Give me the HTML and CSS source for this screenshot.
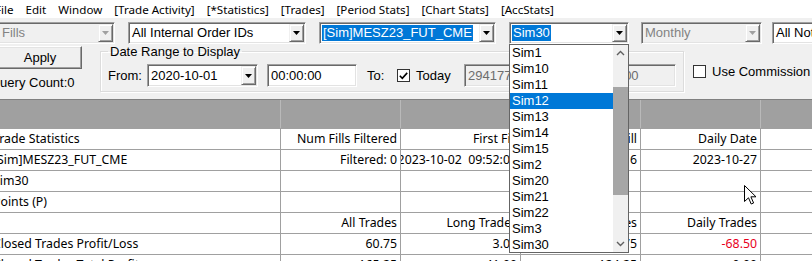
FILE: index.html
```html
<!DOCTYPE html>
<html>
<head>
<meta charset="utf-8">
<title>Trade Statistics</title>
<link rel="stylesheet" href="styles.css">
</head>
<body>
<nav class="menubar">
  <span class="menu first">File</span>
  <span class="menu">Edit</span>
  <span class="menu">Window</span>
  <span class="menu">[Trade Activity]</span>
  <span class="menu">[*Statistics]</span>
  <span class="menu">[Trades]</span>
  <span class="menu">[Period Stats]</span>
  <span class="menu">[Chart Stats]</span>
  <span class="menu">[AccStats]</span>
</nav>

<div class="toolbar">
  <div class="combos">
    <div class="combo disabled c-fills">
      <span class="combo-text">Fills</span>
      <span class="combo-btn"><svg width="7" height="4" viewBox="0 0 7 4"><path d="M0 0h7L3.5 4z"/></svg></span>
    </div>
    <div class="combo c-ids">
      <span class="combo-text">All Internal Order IDs</span>
      <span class="combo-btn"><svg width="7" height="4" viewBox="0 0 7 4"><path d="M0 0h7L3.5 4z"/></svg></span>
    </div>
    <div class="combo c-sym">
      <span class="combo-text"><span class="sel">[Sim]MESZ23_FUT_CME</span></span>
      <span class="combo-btn"><svg width="7" height="4" viewBox="0 0 7 4"><path d="M0 0h7L3.5 4z"/></svg></span>
    </div>
    <div class="combo c-acct">
      <span class="combo-text"><span class="sel">Sim30</span></span>
      <span class="combo-btn"><svg width="7" height="4" viewBox="0 0 7 4"><path d="M0 0h7L3.5 4z"/></svg></span>
      <div class="dropdown">
        <ul class="dd-list">
          <li>Sim1</li>
          <li>Sim10</li>
          <li>Sim11</li>
          <li class="sel">Sim12</li>
          <li>Sim13</li>
          <li>Sim14</li>
          <li>Sim15</li>
          <li>Sim2</li>
          <li>Sim20</li>
          <li>Sim21</li>
          <li>Sim22</li>
          <li>Sim3</li>
          <li>Sim30</li>
        </ul>
        <div class="dd-scroll">
          <span class="sb-btn"><svg width="9" height="6" viewBox="0 0 9 6"><path d="M1 5L4.5 1.5L8 5" fill="none" stroke="#606060" stroke-width="1.4"/></svg></span>
          <span class="sb-track"><span class="sb-thumb"></span></span>
          <span class="sb-btn"><svg width="9" height="6" viewBox="0 0 9 6"><path d="M1 1L4.5 4.5L8 1" fill="none" stroke="#606060" stroke-width="1.4"/></svg></span>
        </div>
      </div>
    </div>
    <div class="combo disabled c-period">
      <span class="combo-text">Monthly</span>
      <span class="combo-btn"><svg width="7" height="4" viewBox="0 0 7 4"><path d="M0 0h7L3.5 4z"/></svg></span>
    </div>
    <div class="combo c-notes">
      <span class="combo-text">All Notes</span>
      <span class="combo-btn"><svg width="7" height="4" viewBox="0 0 7 4"><path d="M0 0h7L3.5 4z"/></svg></span>
    </div>
  </div>

  <div class="controls">
    <div class="left-col">
      <button class="btn">Apply</button>
      <div class="query">Query Count:0</div>
    </div>
    <fieldset class="group">
      <legend>Date Range to Display</legend>
      <div class="group-row">
        <span class="lbl l-from">From:</span>
        <div class="datepick">
          <span class="edit-text">2020-10-01</span>
          <span class="combo-btn"><svg width="7" height="4" viewBox="0 0 7 4"><path d="M0 0h7L3.5 4z"/></svg></span>
        </div>
        <div class="edit e-time">00:00:00</div>
        <span class="lbl l-to">To:</span>
        <span class="check"><svg width="9" height="8" viewBox="0 0 9 8"><path d="M0.8 3.8L3.3 6.3L8.2 0.9" fill="none" stroke="#000" stroke-width="1.6"/></svg></span>
        <span class="lbl l-today">Today</span>
        <div class="edit disabled e-date2">29417760</div>
        <div class="edit disabled e-time2">00:00:00</div>
      </div>
    </fieldset>
    <div class="commission">
      <span class="check"></span>
      <span class="lbl">Use Commission</span>
    </div>
  </div>
</div>

<div class="grid">
  <div class="grow head">
    <div class="cell"></div><div class="cell"></div><div class="cell"></div><div class="cell"></div><div class="cell"></div><div class="cell"></div>
  </div>
  <div class="grow">
    <div class="cell">Trade Statistics</div>
    <div class="cell r">Num Fills Filtered</div>
    <div class="cell r">First Fill</div>
    <div class="cell r">Last Fill</div>
    <div class="cell r">Daily Date</div>
    <div class="cell"></div>
  </div>
  <div class="grow">
    <div class="cell">[Sim]MESZ23_FUT_CME</div>
    <div class="cell r">Filtered: 0</div>
    <div class="cell r">2023-10-02  09:52:04</div>
    <div class="cell r">2023-10-27  14:23:16</div>
    <div class="cell r">2023-10-27</div>
    <div class="cell"></div>
  </div>
  <div class="grow">
    <div class="cell">Sim30</div>
    <div class="cell"></div><div class="cell"></div><div class="cell"></div><div class="cell"></div><div class="cell"></div>
  </div>
  <div class="grow">
    <div class="cell">Points (P)</div>
    <div class="cell"></div><div class="cell"></div><div class="cell"></div><div class="cell"></div><div class="cell"></div>
  </div>
  <div class="grow">
    <div class="cell"></div>
    <div class="cell r">All Trades</div>
    <div class="cell r">Long Trades</div>
    <div class="cell r">Short Trades</div>
    <div class="cell r">Daily Trades</div>
    <div class="cell"></div>
  </div>
  <div class="grow">
    <div class="cell">Closed Trades Profit/Loss</div>
    <div class="cell r">60.75</div>
    <div class="cell r">3.00</div>
    <div class="cell r">57.75</div>
    <div class="cell r neg">-68.50</div>
    <div class="cell"></div>
  </div>
  <div class="grow">
    <div class="cell">Closed Trades Total Profit</div>
    <div class="cell r">165.25</div>
    <div class="cell r">41.00</div>
    <div class="cell r">124.25</div>
    <div class="cell r">0.00</div>
    <div class="cell"></div>
  </div>
</div>

<svg class="cursor" width="13" height="20" viewBox="0 0 13 20">
  <path d="M0.5 0.5V16.5L4.5 12.8L7.2 19L9.6 18L6.9 11.8H12Z" fill="#fff" stroke="#000" stroke-width="1" stroke-linejoin="miter"/>
</svg>
</body>
</html>
```

FILE: styles.css
```css
* { box-sizing: border-box; }

html, body {
  margin: 0;
  padding: 0;
}

body {
  width: 812px;
  height: 261px;
  overflow: hidden;
  position: relative;
  background: #f0f0f0;
  color: #000;
  font-family: "Liberation Sans", Arial, sans-serif;
  font-size: 13px;
}

/* ---------- menu bar ---------- */
.menubar {
  display: flex;
  height: 18px;
  padding-top: 1px;
  background: #fff;
  font-family: "Noto Sans", sans-serif;
  font-size: 11.6px;
  line-height: 17px;
  white-space: nowrap;
}
.menu { padding: 0 6px; }
.menu.first { margin-left: -11px; }

/* ---------- toolbar ---------- */
.toolbar { height: 81px; }

.combos {
  display: flex;
  gap: 13px;
  padding-top: 4px;
  height: 26px;
}

.combo {
  position: relative;
  flex: none;
  display: flex;
  height: 22px;
  padding: 1px;
  background: #fff;
  border: 1px solid;
  border-color: #a0a0a0 #fff #fff #a0a0a0;
  box-shadow: inset 1px 1px #696969, inset -1px -1px #e3e3e3;
}
.combo.disabled { background: #f0f0f0; color: #838383; }
.combo.disabled .combo-btn svg { fill: #a0a0a0; }

.c-fills { width: 117px; margin-left: -2px; }
.c-ids { width: 178px; }
.c-sym { width: 177px; }
.c-acct { width: 120px; }
.c-period { width: 121px; margin-left: -1px; }
.c-notes { width: 120px; margin-left: -3px; }

.combo-text {
  flex: 1;
  min-width: 0;
  padding-left: 2px;
  line-height: 18px;
  white-space: nowrap;
  overflow: hidden;
}
.sel {
  display: inline-block;
  margin-left: -1px;
  padding: 0 1px;
  line-height: 16px;
  background: #0078d7;
  color: #fff;
}

.combo-btn {
  flex: none;
  width: 15px;
  display: flex;
  align-items: center;
  justify-content: center;
  background: #f0f0f0;
  border: 1px solid;
  border-color: #f0f0f0 #696969 #696969 #f0f0f0;
  box-shadow: inset 1px 1px #fff, inset -1px -1px #a0a0a0;
}
.combo-btn svg { fill: #000; }

/* ---------- dropdown list ---------- */
.dropdown {
  position: absolute;
  left: -1px;
  top: calc(100% + 1px);
  z-index: 5;
  width: 120px;
  height: 209px;
  display: flex;
  background: #fff;
  border: 1px solid #646464;
  color: #000;
}
.dd-list {
  flex: 1;
  list-style: none;
  margin: 0;
  padding: 0;
  overflow: hidden;
}
.dd-list li {
  height: 16px;
  line-height: 16px;
  padding-left: 2px;
  white-space: nowrap;
}
.dd-list li.sel {
  display: block;
  margin: 0;
  background: #0078d7;
  color: #fff;
}
.dd-scroll {
  flex: none;
  width: 15px;
  display: flex;
  flex-direction: column;
  background: #f0f0f0;
}
.sb-btn {
  flex: none;
  height: 16px;
  display: flex;
  align-items: center;
  justify-content: center;
}
.sb-track { flex: 1; }
.sb-thumb {
  display: block;
  margin-top: 26px;
  height: 108px;
  background: #a6a6a6;
}

/* ---------- second row ---------- */
.controls {
  display: flex;
  height: 55px;
}

.left-col {
  flex: none;
  width: 110px;
  margin-left: -10px;
}
.btn {
  display: block;
  width: 84px;
  height: 23px;
  margin: 2px 0 0 8px;
  padding: 0;
  background: #f0f0f0;
  border: 1px solid;
  border-color: #fff #696969 #696969 #fff;
  box-shadow: inset -1px -1px #a0a0a0, inset 1px 1px #e3e3e3;
  font-family: "Liberation Sans", Arial, sans-serif;
  font-size: 13px;
  color: #000;
}
.query {
  margin-top: 6px;
  line-height: 15px;
  white-space: nowrap;
}

.group {
  flex: none;
  width: 584px;
  height: 48px;
  margin: 0;
  padding: 0 6px 3px 7px;
  min-width: 0;
  border: 1px solid #dcdcdc;
  box-shadow: inset 1px 1px #fff, 1px 1px #fff;
}
.group legend {
  padding: 0 2px;
  margin: 0;
  line-height: 15px;
}
.group-row {
  display: flex;
  align-items: center;
  height: 23px;
  margin-top: 5px;
}

.lbl { white-space: nowrap; line-height: 23px; }
.l-from { width: 39px; flex: none; }
.l-to { width: 30px; margin-left: 10px; flex: none; }
.l-today { width: 48px; margin-left: 6px; flex: none; }

.datepick, .edit {
  flex: none;
  height: 23px;
  display: flex;
  background: #fff;
  border: 1px solid;
  border-color: #a0a0a0 #fff #fff #a0a0a0;
  box-shadow: inset 1px 1px #696969, inset -1px -1px #e3e3e3;
  padding: 1px;
  line-height: 19px;
  white-space: nowrap;
  overflow: hidden;
}
.datepick { width: 111px; }
.edit { padding-left: 3px; }
.edit-text { flex: 1; padding-left: 2px; }
.edit.disabled { background: #f0f0f0; color: #6d6d6d; }
.e-time { width: 90px; margin-left: 9px; }
.e-date2 { width: 110px; }
.e-time2 { width: 92px; margin-left: 10px; }

.check {
  flex: none;
  width: 13px;
  height: 13px;
  display: flex;
  align-items: center;
  justify-content: center;
  background: #fff;
  border: 1px solid #333;
}

.commission {
  flex: none;
  display: flex;
  align-items: center;
  height: 13px;
  margin: 21px 0 0 9px;
  gap: 6px;
}
.commission .lbl { line-height: 13px; }

/* ---------- grid ---------- */
.grid {
  margin-left: -10px;
  border-top: 1px solid #808080;
  font-family: "Noto Sans", sans-serif;
  font-size: 12.3px;
}
.grow {
  display: grid;
  grid-template-columns: 291px 120px 120px 120px 120px 120px;
  height: 21px;
  background: #fff;
  border-bottom: 1px solid #a0a0a0;
}
.grow.head {
  height: 29px;
  background: #a0a0a0;
}
.cell {
  display: flex;
  min-width: 0;
  padding: 0 3px;
  line-height: 20px;
  white-space: pre;
  overflow: hidden;
  border-right: 1px solid #a0a0a0;
}
.head .cell { border-right-color: #b9b9b9; }
.cell.r { justify-content: flex-end; }
.cell.neg { color: #e8001c; }

/* ---------- pointer ---------- */
.cursor {
  position: absolute;
  left: 744px;
  top: 185px;
}
```
